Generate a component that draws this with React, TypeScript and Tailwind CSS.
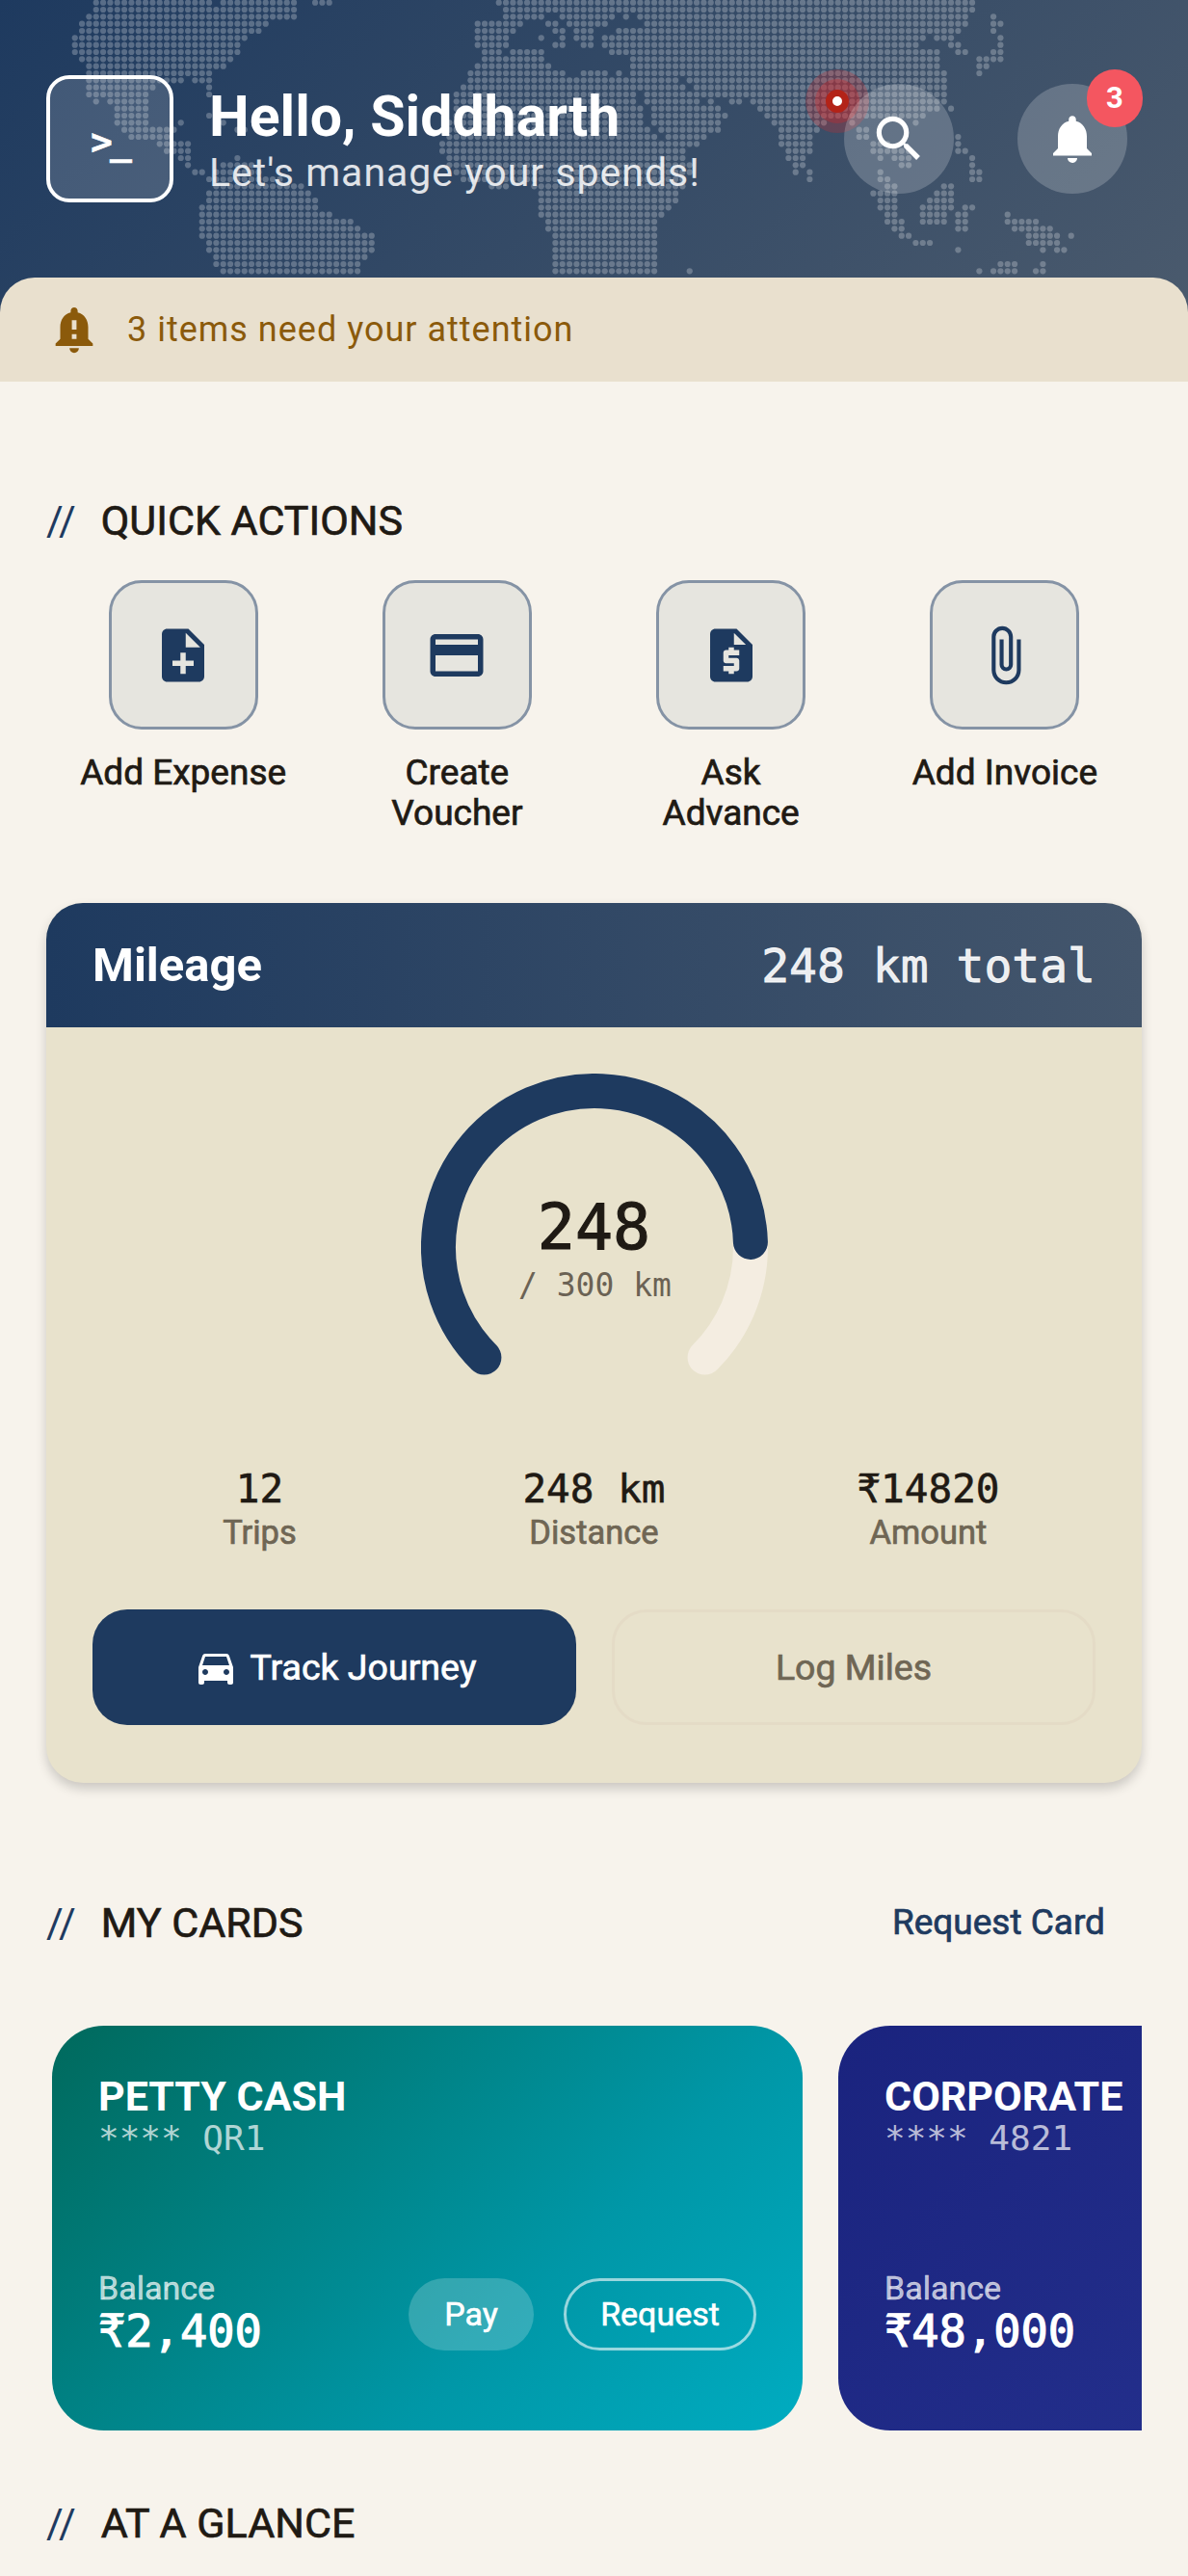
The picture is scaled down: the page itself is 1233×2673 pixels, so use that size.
import React from 'react'
import {
    MdSearch,
    MdNotifications,
    MdNotificationImportant,
    MdNoteAdd,
    MdCreditCard,
    MdRequestQuote,
    MdAttachFile,
    MdDirectionsCar,
} from 'react-icons/md'

// dot map rows, spans measured from the reference crops (crop px, 3x)
const WEST: number[][] = [
    [110, 475, 505, 745, 790, 850],
    [110, 745],
    [88, 745],
    [66, 655],
    [66, 635],
    [44, 590],
    [44, 570],
    [44, 570],
    [66, 545],
    [88, 520],
    [88, 480],
    [88, 390, 415, 480],
    [88, 300, 460, 480],
    [88, 280, 460, 480],
    [110, 125, 155, 280],
    [175, 280],
    [175, 280, 460, 480],
    [175, 280, 370, 390, 490, 520],
    [198, 370, 550, 590],
    [220, 350],
    [310, 410],
    [330, 410],
    [375, 410, 550, 565],
    [395, 410, 505, 610],
    [420, 460, 490, 630],
    [460, 700],
    [480, 760],
    [460, 785],
    [460, 808],
    [440, 808],
    [440, 850],
    [440, 915],
    [440, 940],
    [440, 985],
    [460, 985],
    [460, 985],
    [485, 960],
    [485, 940],
    [505, 940],
]
const CENTER: number[][] = [
    [225, 1200],
    [248, 1200],
    [248, 380, 420, 590, 620, 640, 665, 1200],
    [160, 305, 380, 415, 445, 570, 690, 1200],
    [160, 280, 400, 440, 470, 530, 600, 1200],
    [160, 260, 355, 375, 420, 440, 465, 525, 555, 1200],
    [160, 260, 400, 440, 490, 525, 555, 1200],
    [180, 240, 265, 375, 578, 1200],
    [180, 370, 645, 1200],
    [160, 395, 645, 1200],
    [135, 440, 490, 570, 600, 615, 645, 1200],
    [135, 800, 820, 1200],
    [115, 810, 840, 1200],
    [95, 660, 685, 880, 890, 1200],
    [95, 660, 685, 860, 885, 900, 950, 990, 1015, 1200],
    [95, 680, 710, 925, 1040, 1200],
    [95, 680, 710, 945, 1062, 1200],
    [75, 680, 710, 925, 1085, 1200],
    [75, 700, 730, 925, 1107, 1200],
    [75, 725, 752, 880, 1107, 1200],
    [50, 745, 752, 860, 1107, 1200],
    [50, 815, 1130, 1200],
    [70, 815, 1130, 1185],
    [70, 835, 1150, 1180],
    [95, 835, 1150, 1165],
    [115, 815],
    [210, 260, 335, 810],
    [355, 790],
    [355, 790],
    [355, 770],
    [355, 745],
    [378, 725],
    [378, 725],
    [400, 725],
    [400, 725],
    [400, 725],
    [400, 725],
    [400, 725],
    [400, 725, 820, 835],
]
const EAST: number[][] = [
    [0, 690],
    [0, 690],
    [0, 670, 745, 760],
    [0, 670, 745, 785],
    [0, 650, 745, 760],
    [0, 540, 570, 630, 767, 785],
    [0, 520, 615, 650, 767, 785],
    [0, 585, 635, 670, 745, 785],
    [0, 585, 700, 785],
    [0, 585, 700, 740],
    [0, 605, 700, 715],
    [0, 605],
    [0, 605],
    [0, 605],
    [0, 10, 30, 605],
    [20, 585, 610, 630],
    [40, 540],
    [65, 230, 300, 330, 500, 520],
    [85, 210, 330, 365],
    [85, 185, 330, 365, 635, 650],
    [85, 165, 375, 440, 635, 650],
    [105, 165, 375, 505, 635, 670],
    [105, 165, 395, 410, 440, 505, 680, 695],
    [130, 165, 460, 495, 680, 695],
    [130, 145, 175, 190, 395, 410, 680, 715],
    [175, 190, 395, 430, 680, 715],
    [415, 450, 590, 630],
    [370, 450, 570, 630],
    [395, 450, 550, 630],
    [395, 450, 525, 630, 655, 695],
    [415, 450, 525, 610, 635, 675, 790, 805],
    [415, 475, 525, 610, 635, 675, 790, 895],
    [440, 475, 635, 675, 812, 940],
    [460, 495, 855, 960, 990, 1005],
    [505, 565, 855, 960],
    [635, 650, 900, 915, 945, 980],
    [],
    [770, 825, 900, 915],
    [700, 715, 745, 825, 880, 915],
]

const PITCH = 22 / 3

const buildDots = () => {
    const seen = new Set<string>()
    const sources: [number[][], number][] = [
        [WEST, 60],
        [CENTER, 440],
        [EAST, 780],
    ]
    sources.forEach(([rows, offset]) => {
        rows.forEach((spans, row) => {
            for (let i = 0; i < spans.length; i += 2) {
                const from = Math.round((offset + spans[i] / 3 + 3 - 4.4) / PITCH)
                const to = Math.round((offset + spans[i + 1] / 3 - 3 - 4.4) / PITCH)
                for (let col = from; col <= to; col++) seen.add(`${col},${row}`)
            }
        })
    })
    return Array.from(seen).map((key) => key.split(',').map(Number))
}

const WorldMap = () => (
    <svg
        className="absolute left-0 top-0"
        width="1233"
        height="288"
        viewBox="0 0 1233 288"
        fill="#ffffff"
        fillOpacity="0.25"
    >
        {buildDots().map(([col, row]) => (
            <circle
                key={`${col}-${row}`}
                cx={4.4 + col * PITCH}
                cy={2.67 + row * PITCH}
                r="3.1"
            />
        ))}
    </svg>
)

const polar = (bearing: number, r: number) => {
    const a = (bearing * Math.PI) / 180
    return [180 + r * Math.sin(a), 180 - r * Math.cos(a)]
}

const arcPath = (start: number, end: number, r: number) => {
    const [x1, y1] = polar(start, r)
    const [x2, y2] = polar(end, r)
    const large = end - start > 180 ? 1 : 0
    return `M ${x1} ${y1} A ${r} ${r} 0 ${large} 1 ${x2} ${y2}`
}

const Gauge = () => (
    <div className="relative mx-auto h-[360px] w-[360px]">
        <svg width="360" height="360" viewBox="0 0 360 360" fill="none">
            <path
                d={arcPath(225, 495, 162)}
                stroke="#f4ede1"
                strokeWidth="36"
                strokeLinecap="round"
            />
            <path
                d={arcPath(225, 225 + (270 * 248) / 300, 162)}
                stroke="#1e3a5f"
                strokeWidth="36"
                strokeLinecap="round"
            />
        </svg>
        <div className="absolute inset-0 flex flex-col items-center pt-[122px] font-['DejaVu_Sans_Mono',monospace]">
            <span className="text-[65px] leading-[76px] text-[#1f1a14] [-webkit-text-stroke:1.2px_currentColor]">
                248
            </span>
            <span className="pl-[2px] text-[33px] leading-[44px] text-[#6b6254]">
                / 300 km
            </span>
        </div>
    </div>
)

const SectionTitle = ({ title, action }: { title: string; action?: string }) => (
    <div className="flex h-[56px] items-center justify-between">
        <div className="flex items-center gap-[26px] text-[43px]">
            <span className="text-[#1e3a5f]">//</span>
            <span className="text-[#1f1a14] [-webkit-text-stroke:0.7px_currentColor]">
                {title}
            </span>
        </div>
        {action && (
            <span className="pr-[38px] text-[37px] text-[#1e3a5f] [-webkit-text-stroke:0.7px_currentColor]">
                {action}
            </span>
        )}
    </div>
)

const quickActions = [
    { label: 'Add Expense', icon: MdNoteAdd },
    { label: 'Create\nVoucher', icon: MdCreditCard },
    { label: 'Ask\nAdvance', icon: MdRequestQuote },
    { label: 'Add Invoice', icon: MdAttachFile },
]

const stats = [
    { value: '12', label: 'Trips' },
    { value: '248 km', label: 'Distance' },
    { value: '₹14820', label: 'Amount' },
]

const App = () => {
    return (
        <div className="h-[2673px] w-[1233px] overflow-hidden bg-[#f7f3ec] font-[Roboto,sans-serif]">
            <header className="relative h-[324px] overflow-hidden bg-[linear-gradient(135deg,#1e3a5f,#4a5a6d)]">
                <WorldMap />
                <div className="relative flex items-start px-[48px] pt-[78px]">
                    <div className="flex h-[132px] w-[132px] items-center justify-center rounded-[24px] border-[4px] border-white bg-white/15 pt-[6px] font-['DejaVu_Sans_Mono',monospace] text-[38px] font-bold tracking-[-3px] text-white [-webkit-text-stroke:0.5px_currentColor]">
                        &gt;_
                    </div>
                    <div className="ml-[37px] mt-[8px] flex flex-col">
                        <span className="text-[59px] leading-[69px] font-bold text-white">
                            Hello, Siddharth
                        </span>
                        <span className="text-[41px] leading-[48px] tracking-[1px] text-white/85">
                            Let's manage your spends!
                        </span>
                    </div>
                </div>
                <span className="absolute left-[836px] top-[72px] h-[66px] w-[66px] rounded-full bg-[#dc2626]/25" />
                <span className="absolute left-[846px] top-[82px] h-[46px] w-[46px] rounded-full bg-[#dc2626]/30" />
                <span className="absolute left-[857px] top-[93px] h-[24px] w-[24px] rounded-full border-[7px] border-[#b32318] bg-white" />
                <div className="absolute left-[876px] top-[87px] flex h-[114px] w-[114px] items-center justify-center rounded-full bg-white/20 text-white">
                    <MdSearch size={62} />
                </div>
                <div className="absolute left-[1056px] top-[87px] flex h-[114px] w-[114px] items-center justify-center rounded-full bg-white/20 text-white">
                    <MdNotifications size={60} />
                </div>
                <span className="absolute left-[1128px] top-[72px] flex h-[60px] w-[58px] items-center justify-center rounded-full bg-[#f45660] text-[31px] font-bold text-white">
                    3
                </span>
            </header>

            <div className="relative -mt-[36px] flex h-[108px] items-center rounded-t-[36px] bg-[#e9e0ce] pl-[48px] text-[#8b5a0b]">
                <MdNotificationImportant size={58} />
                <span className="ml-[26px] text-[36px] tracking-[1px]">
                    3 items need your attention
                </span>
            </div>

            <main className="px-[48px]">
                <div className="mt-[116px]">
                    <SectionTitle title="QUICK ACTIONS" />
                </div>
                <div className="mt-[34px] grid grid-cols-4">
                    {quickActions.map(({ label, icon: Icon }) => (
                        <div key={label} className="flex flex-col items-center">
                            <div className="flex h-[155px] w-[155px] items-center justify-center rounded-[34px] border-[3px] border-[#8593a5] bg-[#e6e5df] text-[#1e3a5f]">
                                <Icon size={66} />
                            </div>
                            <span className="mt-[24px] whitespace-pre-line text-center text-[37px] leading-[42px] text-[#1f1a14] [-webkit-text-stroke:0.7px_currentColor]">
                                {label}
                            </span>
                        </div>
                    ))}
                </div>

                <section className="mt-[72px] overflow-hidden rounded-[38px] bg-[#e8e2cc] shadow-[0_6px_12px_rgba(0,0,0,0.18)]">
                    <div className="flex h-[129px] items-center justify-between bg-[linear-gradient(90deg,#1e3a5f,#44566c)] px-[48px]">
                        <span className="text-[49px] font-bold text-white">
                            Mileage
                        </span>
                        <span className="font-['DejaVu_Sans_Mono',monospace] text-[48px] text-white/90 [-webkit-text-stroke:0.8px_currentColor]">
                            248 km total
                        </span>
                    </div>
                    <div className="px-[48px] pb-[60px] pt-[48px]">
                        <Gauge />
                        <div className="mt-[47px] grid grid-cols-3 text-center">
                            {stats.map((stat) => (
                                <div key={stat.label} className="flex flex-col">
                                    <span className="font-['DejaVu_Sans_Mono',monospace] text-[41px] leading-[49px] text-[#1f1a14] [-webkit-text-stroke:0.6px_currentColor]">
                                        {stat.value}
                                    </span>
                                    <span className="text-[34.5px] leading-[41px] text-[#6f6654] [-webkit-text-stroke:0.7px_currentColor]">
                                        {stat.label}
                                    </span>
                                </div>
                            ))}
                        </div>
                        <div className="mt-[59px] grid grid-cols-2 gap-[37px]">
                            <button className="flex h-[120px] items-center justify-center gap-[12px] rounded-[36px] bg-[#1e3a5f] text-[37.5px] text-white [-webkit-text-stroke:0.7px_currentColor]">
                                <MdDirectionsCar size={48} />
                                Track Journey
                            </button>
                            <button className="flex h-[120px] items-center justify-center rounded-[36px] border-[3px] border-[#e4dbc6] text-[37.5px] text-[#6f6654] [-webkit-text-stroke:0.7px_currentColor]">
                                Log Miles
                            </button>
                        </div>
                    </div>
                </section>

                <div className="mt-[117px]">
                    <SectionTitle title="MY CARDS" action="Request Card" />
                </div>

                <div className="mt-[79px] flex gap-[37px] overflow-hidden pl-[6px]">
                    <div className="flex h-[420px] w-[779px] shrink-0 flex-col justify-between rounded-[54px] bg-[linear-gradient(135deg,#00695c,#0097a7_65%,#00acc1)] px-[48px] pb-[76px] pt-[50px] text-white">
                        <div className="flex flex-col">
                            <span className="text-[43px] leading-[46px] font-bold">
                                PETTY CASH
                            </span>
                            <span className="font-['DejaVu_Sans_Mono',monospace] text-[36px] leading-[42px] text-white/70">
                                **** QR1
                            </span>
                        </div>
                        <div className="flex items-center justify-between">
                            <div className="flex flex-col">
                                <span className="text-[34px] leading-[36px] text-white/70 [-webkit-text-stroke:0.5px_currentColor]">
                                    Balance
                                </span>
                                <span className="font-['DejaVu_Sans_Mono',monospace] text-[47px] leading-[54px] [-webkit-text-stroke:1.2px_currentColor]">
                                    ₹2,400
                                </span>
                            </div>
                            <div className="flex gap-[31px]">
                                <span className="flex h-[75px] w-[130px] items-center justify-center rounded-full bg-white/20 text-[34px] [-webkit-text-stroke:0.6px_currentColor]">
                                    Pay
                                </span>
                                <span className="flex h-[75px] w-[200px] items-center justify-center rounded-full border-[3px] border-white/60 text-[34px] [-webkit-text-stroke:0.6px_currentColor]">
                                    Request
                                </span>
                            </div>
                        </div>
                    </div>
                    <div className="flex h-[420px] w-[779px] shrink-0 flex-col justify-between rounded-[54px] bg-[linear-gradient(135deg,#1a237e,#283593)] px-[48px] pb-[76px] pt-[50px] text-white">
                        <div className="flex flex-col">
                            <span className="text-[43px] leading-[46px] font-bold">
                                CORPORATE
                            </span>
                            <span className="font-['DejaVu_Sans_Mono',monospace] text-[36px] leading-[42px] text-white/70">
                                **** 4821
                            </span>
                        </div>
                        <div className="flex flex-col">
                            <span className="text-[34px] leading-[36px] text-white/70 [-webkit-text-stroke:0.5px_currentColor]">
                                Balance
                            </span>
                            <span className="font-['DejaVu_Sans_Mono',monospace] text-[47px] leading-[54px] [-webkit-text-stroke:1.2px_currentColor]">
                                ₹48,000
                            </span>
                        </div>
                    </div>
                </div>

                <div className="mt-[68px]">
                    <SectionTitle title="AT A GLANCE" />
                </div>
            </main>
        </div>
    )
}

export default App
